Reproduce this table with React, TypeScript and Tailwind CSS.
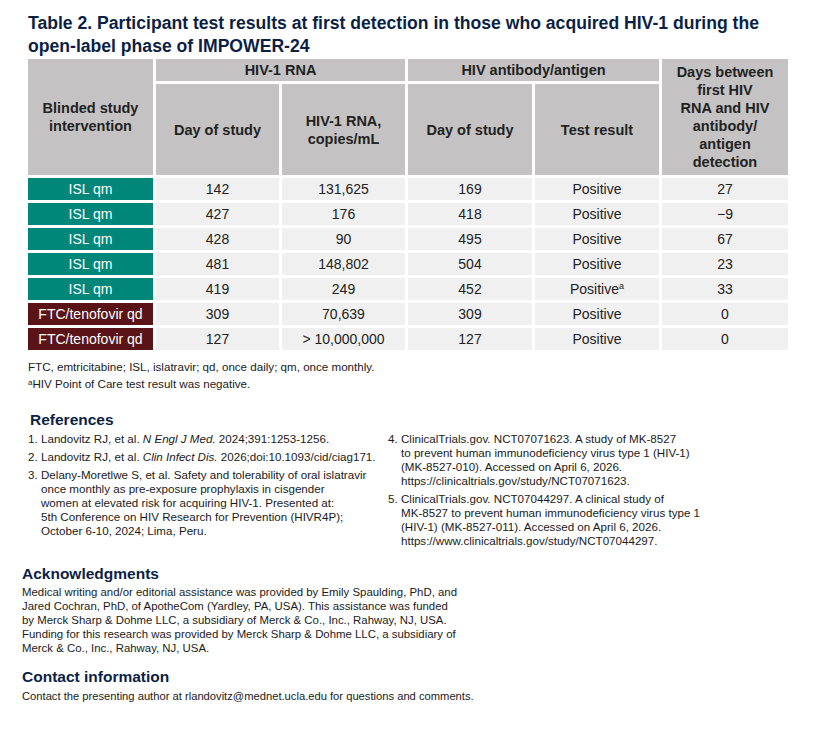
const rows = [
    { arm: "ISL qm", isl: true, rnaDay: "142", copies: "131,625", abDay: "169", result: "Positive", sup: false, days: "27" },
    { arm: "ISL qm", isl: true, rnaDay: "427", copies: "176", abDay: "418", result: "Positive", sup: false, days: "\u22129" },
    { arm: "ISL qm", isl: true, rnaDay: "428", copies: "90", abDay: "495", result: "Positive", sup: false, days: "67" },
    { arm: "ISL qm", isl: true, rnaDay: "481", copies: "148,802", abDay: "504", result: "Positive", sup: false, days: "23" },
    { arm: "ISL qm", isl: true, rnaDay: "419", copies: "249", abDay: "452", result: "Positive", sup: true, days: "33" },
    { arm: "FTC/tenofovir qd", isl: false, rnaDay: "309", copies: "70,639", abDay: "309", result: "Positive", sup: false, days: "0" },
    { arm: "FTC/tenofovir qd", isl: false, rnaDay: "127", copies: "> 10,000,000", abDay: "127", result: "Positive", sup: false, days: "0" },
];

const head = "bg-[#c4c2c3] flex items-center justify-center text-center font-bold text-[14.5px] leading-[18px] text-[#222]";
const cell = "bg-[#f0f0f0] h-[22px] flex items-center justify-center text-[14px] text-[#222]";

const Ref = ({ n, children }: { n: string; children: React.ReactNode }) => (
    <div className="flex">
        <span className="w-[13px] shrink-0">{n}</span>
        <span>{children}</span>
    </div>
);

export default function App() {
    return (
        <div className="w-[819px] h-[733px] bg-white overflow-hidden text-[#1a1a1a]" style={{ fontFamily: '"Liberation Sans", Arial, sans-serif' }}>
            <div className="pl-[28px] pt-[12px]">
                <h1 className="text-[17.6px] leading-[23px] font-bold text-[#0c1f44]">
                    Table 2. Participant test results at first detection in those who acquired HIV-1 during the<br />
                    open-label phase of IMPOWER-24
                </h1>

                {/* Table */}
                <div className="mt-[1px] grid grid-cols-[125px_123px_123px_124px_124px_126px] grid-rows-[22px_91px] gap-[3px] auto-rows-[22px]">
                    <div className={`${head} row-span-2`}>Blinded study<br />intervention</div>
                    <div className={`${head} col-span-2`}>HIV-1 RNA</div>
                    <div className={`${head} col-span-2`}>HIV antibody/antigen</div>
                    <div className={`${head} row-span-2`}>
                        Days between<br />first HIV<br />RNA and HIV<br />antibody/<br />antigen<br />detection
                    </div>
                    <div className={head}>Day of study</div>
                    <div className={head}>HIV-1 RNA,<br />copies/mL</div>
                    <div className={head}>Day of study</div>
                    <div className={head}>Test result</div>

                    {rows.map((r, i) => (
                        <div key={i} className="contents">
                            <div className={`h-[22px] flex items-center justify-center text-[14px] text-white ${r.isl ? "bg-[#00877a]" : "bg-[#5a1417]"}`}>
                                {r.arm}
                            </div>
                            <div className={cell}>{r.rnaDay}</div>
                            <div className={cell}>{r.copies}</div>
                            <div className={cell}>{r.abDay}</div>
                            <div className={cell}>
                                {r.result}
                                {r.sup && <sup className="text-[9px] -top-[0.3em]">a</sup>}
                            </div>
                            <div className={cell}>{r.days}</div>
                        </div>
                    ))}
                </div>

                {/* Footnotes */}
                <div className="mt-[8px] text-[11.6px] leading-[17px]">
                    <div>FTC, emtricitabine; ISL, islatravir; qd, once daily; qm, once monthly.</div>
                    <div><sup className="text-[8px] -top-[0.35em]">a</sup>HIV Point of Care test result was negative.</div>
                </div>
            </div>

            {/* References */}
            <div className="pl-[30px] mt-[18px]">
                <h2 className="text-[15.5px] leading-[20px] font-bold text-[#0c1f44]">References</h2>
            </div>
            <div className="pl-[28px] mt-[2px] flex text-[11.6px] leading-[14px]">
                <div className="w-[360px] flex flex-col gap-[4px]">
                    <Ref n="1.">Landovitz RJ, et al. <i>N Engl J Med.</i> 2024;391:1253-1256.</Ref>
                    <Ref n="2.">Landovitz RJ, et al. <i>Clin Infect Dis.</i> 2026;doi:10.1093/cid/ciag171.</Ref>
                    <Ref n="3.">
                        Delany-Moretlwe S, et al. Safety and tolerability of oral islatravir<br />
                        once monthly as pre-exposure prophylaxis in cisgender<br />
                        women at elevated risk for acquiring HIV-1. Presented at:<br />
                        5th Conference on HIV Research for Prevention (HIVR4P);<br />
                        October 6-10, 2024; Lima, Peru.
                    </Ref>
                </div>
                <div className="flex flex-col gap-[4px]">
                    <Ref n="4.">
                        ClinicalTrials.gov. NCT07071623. A study of MK-8527<br />
                        to prevent human immunodeficiency virus type 1 (HIV-1)<br />
                        (MK-8527-010). Accessed on April 6, 2026.<br />
                        https://clinicaltrials.gov/study/NCT07071623.
                    </Ref>
                    <Ref n="5.">
                        ClinicalTrials.gov. NCT07044297. A clinical study of<br />
                        MK-8527 to prevent human immunodeficiency virus type 1<br />
                        (HIV-1) (MK-8527-011). Accessed on April 6, 2026.<br />
                        https://www.clinicaltrials.gov/study/NCT07044297.
                    </Ref>
                </div>
            </div>

            {/* Acknowledgments & contact */}
            <div className="pl-[22px] mt-[16px]">
                <h2 className="text-[15.5px] leading-[20px] font-bold text-[#0c1f44]">Acknowledgments</h2>
                <p className="mt-[1px] text-[11.4px] leading-[14px]">
                    Medical writing and/or editorial assistance was provided by Emily Spaulding, PhD, and<br />
                    Jared Cochran, PhD, of ApotheCom (Yardley, PA, USA). This assistance was funded<br />
                    by Merck Sharp &amp; Dohme LLC, a subsidiary of Merck &amp; Co., Inc., Rahway, NJ, USA.<br />
                    Funding for this research was provided by Merck Sharp &amp; Dohme LLC, a subsidiary of<br />
                    Merck &amp; Co., Inc., Rahway, NJ, USA.
                </p>
                <h2 className="mt-[12px] text-[15.5px] leading-[20px] font-bold text-[#0c1f44]">Contact information</h2>
                <p className="mt-[2px] text-[11.2px] leading-[14px]">
                    Contact the presenting author at rlandovitz@mednet.ucla.edu for questions and comments.
                </p>
            </div>
        </div>
    );
}
